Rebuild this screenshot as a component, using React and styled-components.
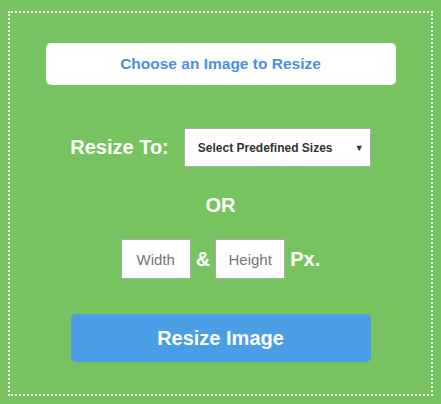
import React from 'react';
import styled, { createGlobalStyle } from 'styled-components';

const GlobalStyle = createGlobalStyle`
html, body {
  margin: 0;
  padding: 0;
  background: #77c35f;
  font-family: "Liberation Sans", Arial, sans-serif;
}
* {
  box-sizing: border-box;
}
`;

const Frame = styled.div`
margin: 11px 8px 0;
height: 385px;
border: 2px dotted #fff;
display: flex;
flex-direction: column;
align-items: center;
padding-top: 30px;
`;

const ChooseBtn = styled.div`
width: 350px;
height: 42px;
background: #fff;
border-radius: 5px;
display: flex;
align-items: center;
justify-content: center;
color: #4a90e2;
font-weight: bold;
font-size: 15.5px;
cursor: pointer;
`;

const Row = styled.div`
display: flex;
align-items: center;
gap: ${p => p.gap || 6}px;
margin-top: ${p => p.top}px;
`;

const Label = styled.span`
color: #fff;
font-weight: bold;
font-size: 20px;
`;

const Select = styled.div`
width: 187px;
height: 39px;
background: #fff;
border: 1px solid #aaa;
display: flex;
align-items: center;
justify-content: space-between;
padding: 0 6px 0 13px;
color: #333;
font-weight: bold;
font-size: 12px;
span {
  font-size: 9px;
}
`;

const Or = styled.div`
margin-top: 27px;
color: #fff;
font-weight: bold;
font-size: 20px;
line-height: 23px;
`;

const SizeInput = styled.input`
width: 70px;
height: 40px;
border: 1px solid #aaa;
background: #fff;
text-align: center;
font-family: "Liberation Sans", Arial, sans-serif;
font-size: 15px;
padding: 0;
outline: none;
&::placeholder {
  color: #757575;
}
`;

const ResizeBtn = styled.div`
margin-top: 35px;
width: 300px;
height: 48px;
background: #4a9ee6;
border-radius: 5px;
display: flex;
align-items: center;
justify-content: center;
color: #fff;
font-weight: bold;
font-size: 20px;
cursor: pointer;
`;

const App = () => {
  return (
    <>
      <GlobalStyle />
      <Frame>
        <ChooseBtn>Choose an Image to Resize</ChooseBtn>
        <Row top={43} gap={15}>
          <Label>Resize To:</Label>
          <Select>
            Select Predefined Sizes
            <span>▼</span>
          </Select>
        </Row>
        <Or>OR</Or>
        <Row top={22} gap={5}>
          <SizeInput placeholder="Width" />
          <Label>&amp;</Label>
          <SizeInput placeholder="Height" />
          <Label>Px.</Label>
        </Row>
        <ResizeBtn>Resize Image</ResizeBtn>
      </Frame>
    </>
  );
};

export default App;
